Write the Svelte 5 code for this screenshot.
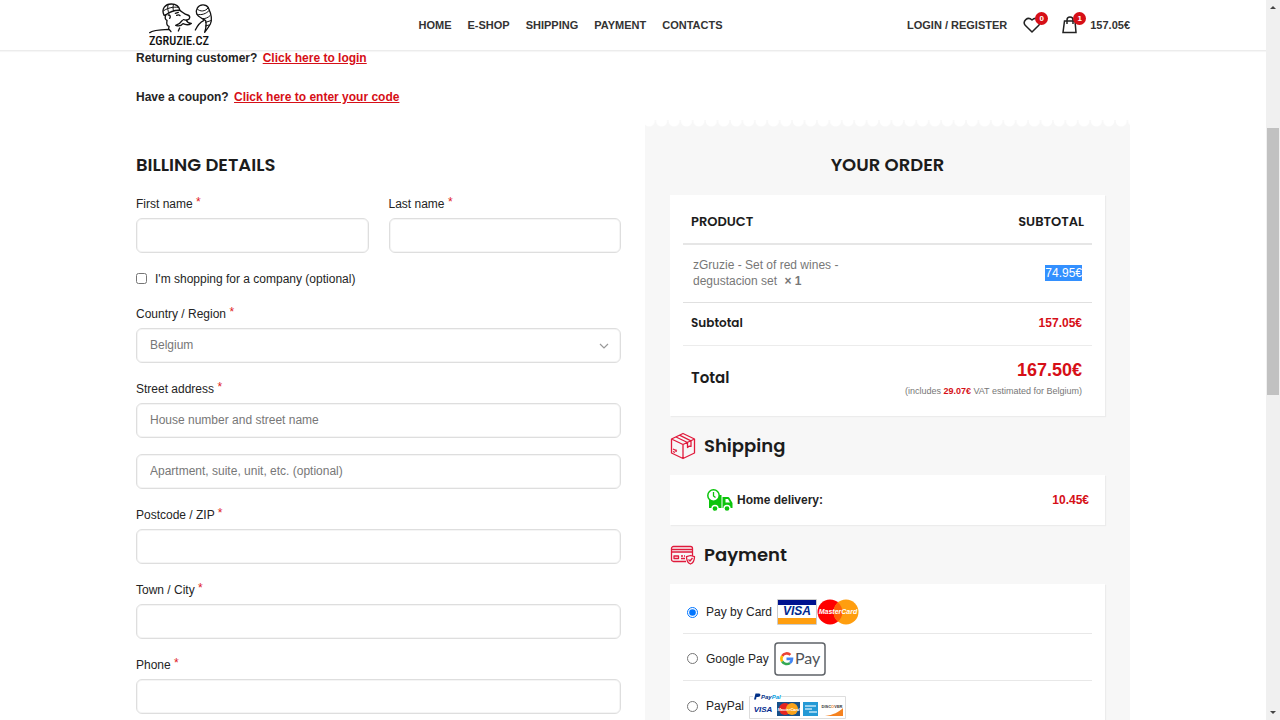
<script>
  const nav = ['HOME', 'E-SHOP', 'SHIPPING', 'PAYMENT', 'CONTACTS'];
  let payment = $state('card');
</script>

{#snippet field(id, text)}
  <div class="field">
    <label for={id}>{text} <span class="req">*</span></label>
    <input {id} type="text" />
  </div>
{/snippet}

<div class="window">
  <div class="page">
    <header>
      <div class="container bar">
        <a class="logo" href="#home" aria-label="zGruzie.cz">
          <svg viewBox="0 0 225 150" width="75" height="50" fill="none" stroke="#111" stroke-width="4" stroke-linecap="round" stroke-linejoin="round">
            <path d="M57 46C48 26 61 12 79 12c14 0 23 7 26 19-15-1-29 3-43 14z" />
            <path d="M56 32c14-9 29-12 44-10M69 15c-2 9-1 17 3 24M86 13c-3 7-3 13 0 19" stroke-width="3" />
            <path d="M62 45c-3 9-1 14 4 16-2 11 2 17 6 18M70 45c5-1 8 5 4 10M72 79l-1 8M104 31c8 4 13 11 24 14 9 3 8 13-2 15-5 1-8 0-11-1M91 40l9-3M95 46c4-2 8-2 10 1" stroke-width="4" />
            <path d="M112 61c-5 8-11 12-20 15 10 4 17 1 22-5 8 4 18 4 25-1-9 0-13-4-15-9" stroke-width="4" />
            <path d="M14 98c8-8 31-9 57-10 4 1 5 5 7 7M104 84l-4 9M151 90c6-12 12-22 25-28" stroke-width="4" />
            <path d="M157 24c7-12 26-13 33-1 8 17 12 37 6 49-5 9-10 16-17 25 4-12 6-23 3-35-8-6-24-11-27-21-2-7-1-12 2-17z" />
            <path d="M157 27c8 9 24 8 32-3M156 43c14 3 27-1 37-12M174 56c8 0 15-3 21-9M182 67l15-5M181 78l11-3" stroke-width="3" />
            <text x="12" y="136">ZGRUZIE.CZ</text>
          </svg>
        </a>
        <nav>
          {#each nav as item}<a href={'#' + item.toLowerCase()}>{item}</a>{/each}
        </nav>
        <div class="tools">
          <a href="#account">LOGIN / REGISTER</a>
          <a class="tool" href="#wishlist" aria-label="Wishlist">
            <svg width="18" height="18" viewBox="0 0 18 18" fill="none" stroke="#222" stroke-width="1.5" stroke-linejoin="round"><path d="M9 16 2.2 9.2C-.8 5.5 4.5-.3 9 4c4.5-4.3 9.8 1.5 6.800 5.200z" /></svg>
            <span class="badge">0</span>
          </a>
          <a class="tool cart" href="#cart">
            <svg width="17" height="18" viewBox="0 0 17 18" fill="none" stroke="#222" stroke-width="1.5"><path d="M3.500 5h10.500l1 11.500h-13zM6 8V4c0-4 6-4 6 0v4" /></svg>
            <span class="badge">1</span>
            <span>157.05€</span>
          </a>
        </div>
      </div>
    </header>

    <main class="container">
      <p class="notice">Returning customer? <a href="#login">Click here to login</a></p>
      <p class="notice">Have a coupon? <a href="#coupon">Click here to enter your code</a></p>

      <form class="columns">
        <section class="billing">
          <h2>BILLING DETAILS</h2>
          <div class="fields">
            <div class="pair">
              {@render field('first', 'First name')}
              {@render field('last', 'Last name')}
            </div>
            <label class="check"><input type="checkbox" /> I'm shopping for a company (optional)</label>
            <div class="field">
              <label for="country">Country / Region <span class="req">*</span></label>
              <div class="select">
                <select id="country"><option>Belgium</option></select>
                <svg width="10" height="6" viewBox="0 0 10 6" fill="none" stroke="#999" stroke-width="1.2"><path d="m1 1 4 4 4-4" /></svg>
              </div>
            </div>
            <div class="field">
              <label for="street">Street address <span class="req">*</span></label>
              <input id="street" type="text" placeholder="House number and street name" />
            </div>
            <input type="text" aria-label="Apartment" placeholder="Apartment, suite, unit, etc. (optional)" />
            {@render field('zip', 'Postcode / ZIP')}
            {@render field('town', 'Town / City')}
            {@render field('phone', 'Phone')}
          </div>
        </section>

        <section class="order">
          <h2>YOUR ORDER</h2>
          <div class="card summary">
            <table>
              <thead>
                <tr><th>PRODUCT</th><th class="num">SUBTOTAL</th></tr>
              </thead>
              <tbody>
                <tr class="item">
                  <td>zGruzie - Set of red wines - degustacion set <strong>× 1</strong></td>
                  <td class="num"><mark>74.95€</mark></td>
                </tr>
                <tr class="sub"><th>Subtotal</th><td class="num price">157.05€</td></tr>
                <tr class="total">
                  <th>Total</th>
                  <td class="num"><strong class="price">167.50€</strong><small>(includes <b class="price">29.07€</b> VAT estimated for Belgium)</small></td>
                </tr>
              </tbody>
            </table>
          </div>

          <h3>
            <svg width="26" height="28" viewBox="0 0 26 28" fill="none" stroke="#e01b3c" stroke-width="1.3" stroke-linejoin="round"><path d="M13 1.500 24.500 7v14L13 26.500 1.500 21V7zM1.500 7 13 12.500 24.500 7M13 12.500v14M9.500 3.200 21 8.800M6 5l11.500 5.500M17.500 10.500v5l1.500-1.300 2 .2V8.800M3 17l4 2M3 19.500l2 1M6 17.500v2.500" /></svg>
            Shipping
          </h3>
          <div class="card delivery">
            <svg width="26" height="23" viewBox="0 0 26 23">
              <path d="M2 6h12.500v13H2zM15.500 8H21q1 0 1.500 1l3 5v5h-10z" fill="#0bc40b" />
              <path d="M18.500 10h2.500l2 3.500h-4.500z" fill="#fff" />
              <g fill="#0bc40b" stroke="#fff" stroke-width="1.3"><circle cx="8" cy="19.500" r="3" /><circle cx="20" cy="19.500" r="3" /></g>
              <circle cx="6.500" cy="6.500" r="5.700" fill="#fff" stroke="#0bc40b" stroke-width="1.5" />
              <path d="M6.500 3v4l2 1.500" fill="none" stroke="#0bc40b" stroke-width="1.3" />
            </svg>
            <span>Home delivery:</span><b class="price">10.45€</b>
          </div>

          <h3>
            <svg width="26" height="20" viewBox="0 0 26 20" fill="none" stroke="#e01b3c" stroke-width="1.3" stroke-linejoin="round"><path d="M16 16.500H3.500a2 2 0 0 1-2-2v-11a2 2 0 0 1 2-2h17a2 2 0 0 1 2 2v7M1.500 4.500h21M1.500 7h21M4 11h4.500v2.500H4zM11 11h2M14 11h1M11 13.500h4M20.500 10.500l4 1.200c0 4-1 6-4 7.300-3-1.300-4-3.300-4-7.300zM18.500 14.500l1.500 1.500 2.500-3" /></svg>
            Payment
          </h3>
          <div class="card methods">
            <label>
              <input type="radio" name="pay" value="card" bind:group={payment} /><span>Pay by Card</span>
              <svg width="82" height="26" viewBox="0 0 82 26">
                <path d="M.5.5h39v25H.5z" fill="#fff" stroke="#ccc" />
                <path d="M1 1h38v5H1z" fill="#00128f" /><path d="M1 19h38v6H1z" fill="#ff9e0f" />
                <text x="20" y="16" text-anchor="middle" class="visa" font-size="12">VISA</text>
                <circle cx="53" cy="13" r="12.500" fill="#f00" /><circle cx="69" cy="13" r="12.500" fill="#ff9e0f" />
                <path d="M61 3.500a12.500 12.500 0 0 1 0 19 12.500 12.500 0 0 1 0-19z" fill="#ff6008" />
                <text x="61" y="15" text-anchor="middle" class="mc" font-size="7">MasterCard</text>
              </svg>
            </label>
            <label>
              <input type="radio" name="pay" value="google" bind:group={payment} /><span>Google Pay</span>
              <svg width="52" height="34" viewBox="0 0 52 34" fill="none">
                <rect x="1" y="1" width="50" height="32" rx="3" fill="#fff" stroke="#5f6368" stroke-width="1.5" />
                <g stroke-width="2.6">
                  <path d="M16.400 12.900A5.300 5.300 0 0 0 8.200 14" stroke="#ea4335" />
                  <path d="M8.200 14a5.300 5.300 0 0 0 0 5.500" stroke="#fbbc04" />
                  <path d="M8.200 19.500a5.300 5.300 0 0 0 7.800 1.400" stroke="#34a853" />
                  <path d="M16 20.900a5.300 5.300 0 0 0 2-4H12.500" stroke="#4285f4" />
                </g>
                <text x="21" y="22" class="gpay" font-size="16">Pay</text>
              </svg>
            </label>
            <label>
              <input type="radio" name="pay" value="paypal" bind:group={payment} /><span>PayPal</span>
              <svg width="98" height="26" viewBox="0 0 98 26">
                <path d="M4 3.500H.5v22h96v-22H32" fill="none" stroke="#ddd" />
                <path d="M6.500.5h3.500c2 0 2 3.500-1 3.500H7.500L7 6.500H5z" fill="#003087" />
                <text x="12" y="6" class="pp" font-size="6" fill="#003087">Pay<tspan fill="#009cde">Pal</tspan></text>
                <text x="14" y="19" text-anchor="middle" class="visa" font-size="8">VISA</text>
                <path d="M28 9h23v14H28z" fill="#15508a" /><circle cx="36" cy="16" r="6" fill="#e52420" /><circle cx="43" cy="16" r="6" fill="#f9a21a" />
                <text x="39.500" y="18" text-anchor="middle" class="mc" font-size="4">MasterCard</text>
                <path d="M54 9h15v14H54z" fill="#2499d5" /><path d="M56 13h11M56 16h7M60 19h8" stroke="#bfe4f7" stroke-width="1.5" />
                <text x="83" y="15" text-anchor="middle" class="disc" font-size="4">DISC<tspan fill="#f58220">O</tspan>VER</text>
                <path d="M94 15v8H76c8-1 14-4 18-8z" fill="#f58220" />
              </svg>
            </label>
          </div>
        </section>
      </form>
    </main>
  </div>
  <div class="scrollbar" aria-hidden="true"><i class="up"></i><div class="track"><div class="thumb"></div></div><i class="down"></i></div>
</div>

<style>
  :global(body) { margin: 0; }
  * { box-sizing: border-box; }
  .window { display: grid; grid-template-columns: 1fr 14px; height: 100vh; overflow: hidden; background: #fff; color: #242424; font: 12px/16px "Liberation Sans", Arial, sans-serif; }
  .page { overflow: hidden; min-width: 0; }
  .container { max-width: 994px; margin: 0 auto; }
  a { color: inherit; text-decoration: none; }
  header { border-bottom: 1px solid #ececec; box-shadow: 0 1px 1px #f6f6f6; font-size: 11px; font-weight: 700; color: #333; }
  .bar { display: flex; align-items: center; height: 50px; }
  .logo { padding: 0 14px 0 9px; height: 50px; }
  .logo svg { display: block; }
  .logo text { font: 500 37px "Liberation Sans Narrow", "Roboto Condensed", "Liberation Sans", sans-serif; fill: #111; stroke: none; }
  nav { display: flex; flex: 1; justify-content: center; gap: 16px; }
  .tools { display: flex; align-items: center; justify-content: flex-end; gap: 16px; }
  .tool { display: flex; align-items: center; position: relative; width: 22px; }
  .cart { width: auto; gap: 12px; }
  .badge { position: absolute; left: 12px; top: -4px; width: 13px; height: 13px; border-radius: 50%; background: #d60f17; color: #fff; font-size: 8px; line-height: 13px; text-align: center; }
  .notice { margin: 0 0 23px; font-weight: 700; }
  .notice:first-child { margin-top: -1px; }
  .notice a { margin-left: 2px; color: #d60f17; text-decoration: underline; }
  .columns { display: grid; grid-template-columns: 1fr 1fr; gap: 24px; margin-top: -8px; }
  h2, h3, th { font-family: Poppins, Inter, sans-serif; color: #1c1c1c; font-weight: 600; }
  h2 { margin: 0; font-size: 18px; line-height: 24px; }
  .billing { padding-top: 33px; }
  .fields { display: grid; gap: 16px; margin-top: 17px; }
  .pair { display: grid; grid-template-columns: 1fr 1fr; gap: 20px; }
  .field > label { display: block; height: 24px; line-height: 20px; }
  .req { color: #e01b24; position: relative; top: -2px; }
  input[type='text'], select { display: block; width: 100%; height: 35px; padding: 0 13px 2px; border: 1px solid #dedede; border-radius: 6px; background: #fff; color: #777; font: inherit; appearance: none; box-shadow: inset 0 0 0 1px #f5f5f5; }
  input::placeholder { color: #777; opacity: 1; }
  .select { display: grid; align-items: center; }
  .select > * { grid-area: 1 / 1; }
  .select svg { justify-self: end; margin-right: 12px; pointer-events: none; }
  .check { display: flex; align-items: center; gap: 8px; height: 19px; }
  input[type='checkbox'], input[type='radio'] { width: 11px; height: 11px; margin: 0; }
  .order { background: radial-gradient(circle at 50% 1px, #fff 5px, transparent 6px) -2px 0 / calc(100% / 39) 7px repeat-x #f7f7f7; padding: 33px 25px 40px; }
  .order h2 { text-align: center; }
  .card { background: #fff; box-shadow: 1px 1px 1px #ececec; }
  .summary { margin-top: 18px; padding: 0 13px; }
  table { width: 100%; border-collapse: collapse; }
  th, td { padding: 0 8px; text-align: left; }
  td { padding: 0 10px; color: #777; }
  .num { text-align: right; }
  thead th { height: 49px; padding-top: 5px; border-bottom: 2px solid #e6e6e6; font-size: 13px; }
  .item td { height: 58px; width: 50%; border-bottom: 1px solid #e0e0e0; }
  .item strong { margin-left: 4px; }
  mark { padding: 1px 0; background: #3390ff; color: #fff; }
  .sub th, .sub td { height: 43px; padding-bottom: 1px; border-bottom: 1px solid #ececec; }
  .sub th { font-size: 12px; }
  .price { color: #d60f17; font-weight: 700; }
  .total th, .total td { height: 71px; padding-bottom: 5px; font-size: 15px; }
  .total td { padding-bottom: 4px; }
  .total strong, .total small { display: block; }
  .total strong { font-size: 18px; line-height: 22px; }
  .total small { font-size: 9px; line-height: 16px; margin-top: 2px; white-space: nowrap; }
  h3 { display: flex; align-items: center; gap: 8px; height: 28px; margin: 16px 0 15px; font-size: 18px; }
  .delivery { display: flex; align-items: center; height: 50px; padding: 0 16px 0 37px; gap: 4px; font-weight: 700; }
  .delivery .price { margin-left: auto; }
  .methods { padding: 7px 13px; }
  .methods label { display: flex; align-items: center; height: 47px; padding: 3px 0 0 4px; border-bottom: 1px solid #e8e8e8; }
  .methods label:first-child { height: 43px; padding-top: 0; }
  .methods label:last-child { border: 0; }
  .methods span { margin: 0 5px 0 8px; }
  .visa { font-family: "Liberation Sans", sans-serif; font-weight: 700; font-style: italic; fill: #00298f; }
  .mc { font-family: "Liberation Sans", sans-serif; font-weight: 700; font-style: italic; fill: #fff; }
  .gpay { font-family: Lato, sans-serif; fill: #4f5358; }
  .pp { font-family: "Liberation Sans", sans-serif; font-weight: 700; font-style: italic; }
  .disc { font-family: "Liberation Sans", sans-serif; font-weight: 700; fill: #333; }
  .scrollbar { display: flex; flex-direction: column; align-items: center; justify-content: space-between; height: 100vh; padding: 6px 1px; background: #f0f0f0; }
  .scrollbar i { border: 3px solid transparent; }
  .scrollbar .up { border-bottom-color: #444; border-top: 0; }
  .scrollbar .down { border-top-color: #444; border-bottom: 0; }
  .track { flex: 1; display: grid; grid-template-rows: 17% 38% 1fr; width: 100%; }
  .thumb { grid-row: 2; background: #c1c1c1; }
</style>
